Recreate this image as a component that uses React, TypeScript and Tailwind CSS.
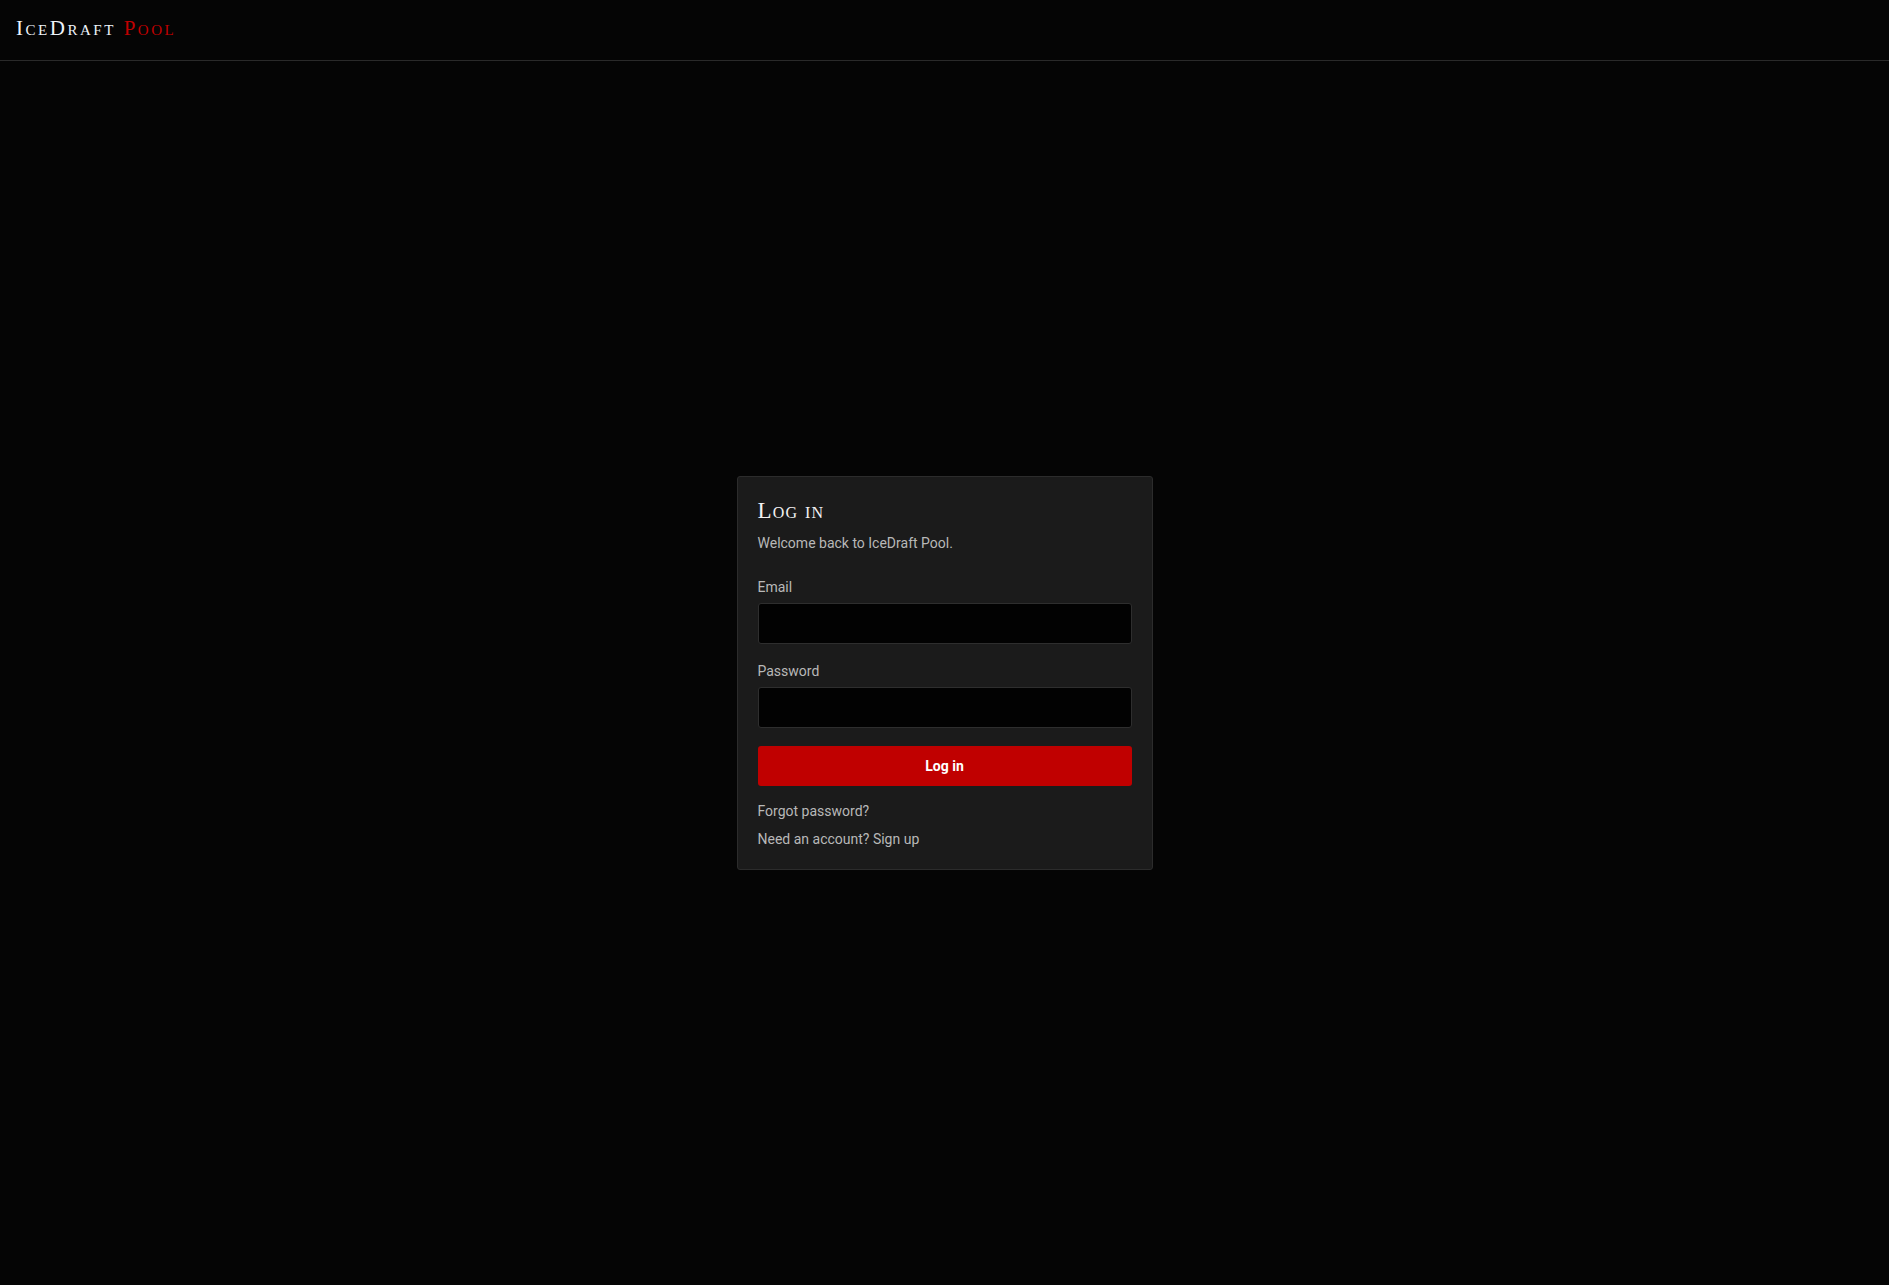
import React from "react";

export default function App() {
  const serif = { fontFamily: '"Liberation Serif", "DejaVu Serif", serif', fontVariant: "small-caps" } as React.CSSProperties;
  return (
    <div className="min-h-screen flex flex-col bg-[#050505] text-[#c4c4c4]" style={{ fontFamily: 'Roboto, "Liberation Sans", sans-serif' }}>
      <header className="h-[61px] shrink-0 border-b border-[#2a2a2a] flex items-center px-[16px]">
        <div className="text-[21px] tracking-[0.12em] leading-none pb-[3px]" style={serif}>
          <span className="text-[#eef4fb]">IceDraft</span>{" "}
          <span className="text-[#c00000]">Pool</span>
        </div>
      </header>
      <main className="flex-1 flex items-center justify-center">
        <div className="w-[416px] bg-[#1b1b1b] border border-[#2c2c2c] rounded-[3px] px-5 pt-[20px] pb-[20px]">
          <h1 className="text-[23px] leading-[28px] text-[#f2f2f2] tracking-[0.05em]" style={serif}>Log in</h1>
          <p className="mt-[8px] text-sm leading-[20px] text-[#b8b8b8]">Welcome back to IceDraft Pool.</p>
          <form className="mt-[24px] flex flex-col" onSubmit={(e) => e.preventDefault()}>
            <label className="text-sm leading-[20px] text-[#b8b8b8]">Email</label>
            <input type="email" className="mt-[6px] h-[41px] w-full bg-[#020202] border border-[#2e2e2e] rounded-[3px] outline-none px-3 text-white" />
            <label className="mt-[17px] text-sm leading-[20px] text-[#b8b8b8]">Password</label>
            <input type="password" className="mt-[6px] h-[41px] w-full bg-[#020202] border border-[#2e2e2e] rounded-[3px] outline-none px-3 text-white" />
            <button type="submit" className="mt-[18px] h-[40px] w-full bg-[#c00000] rounded-[3px] text-white font-bold text-sm">Log in</button>
          </form>
          <div className="mt-[15px] flex flex-col gap-[8px] text-sm leading-[20px] text-[#b8b8b8]">
            <a href="#">Forgot password?</a>
            <a href="#">Need an account? Sign up</a>
          </div>
        </div>
      </main>
    </div>
  );
}
